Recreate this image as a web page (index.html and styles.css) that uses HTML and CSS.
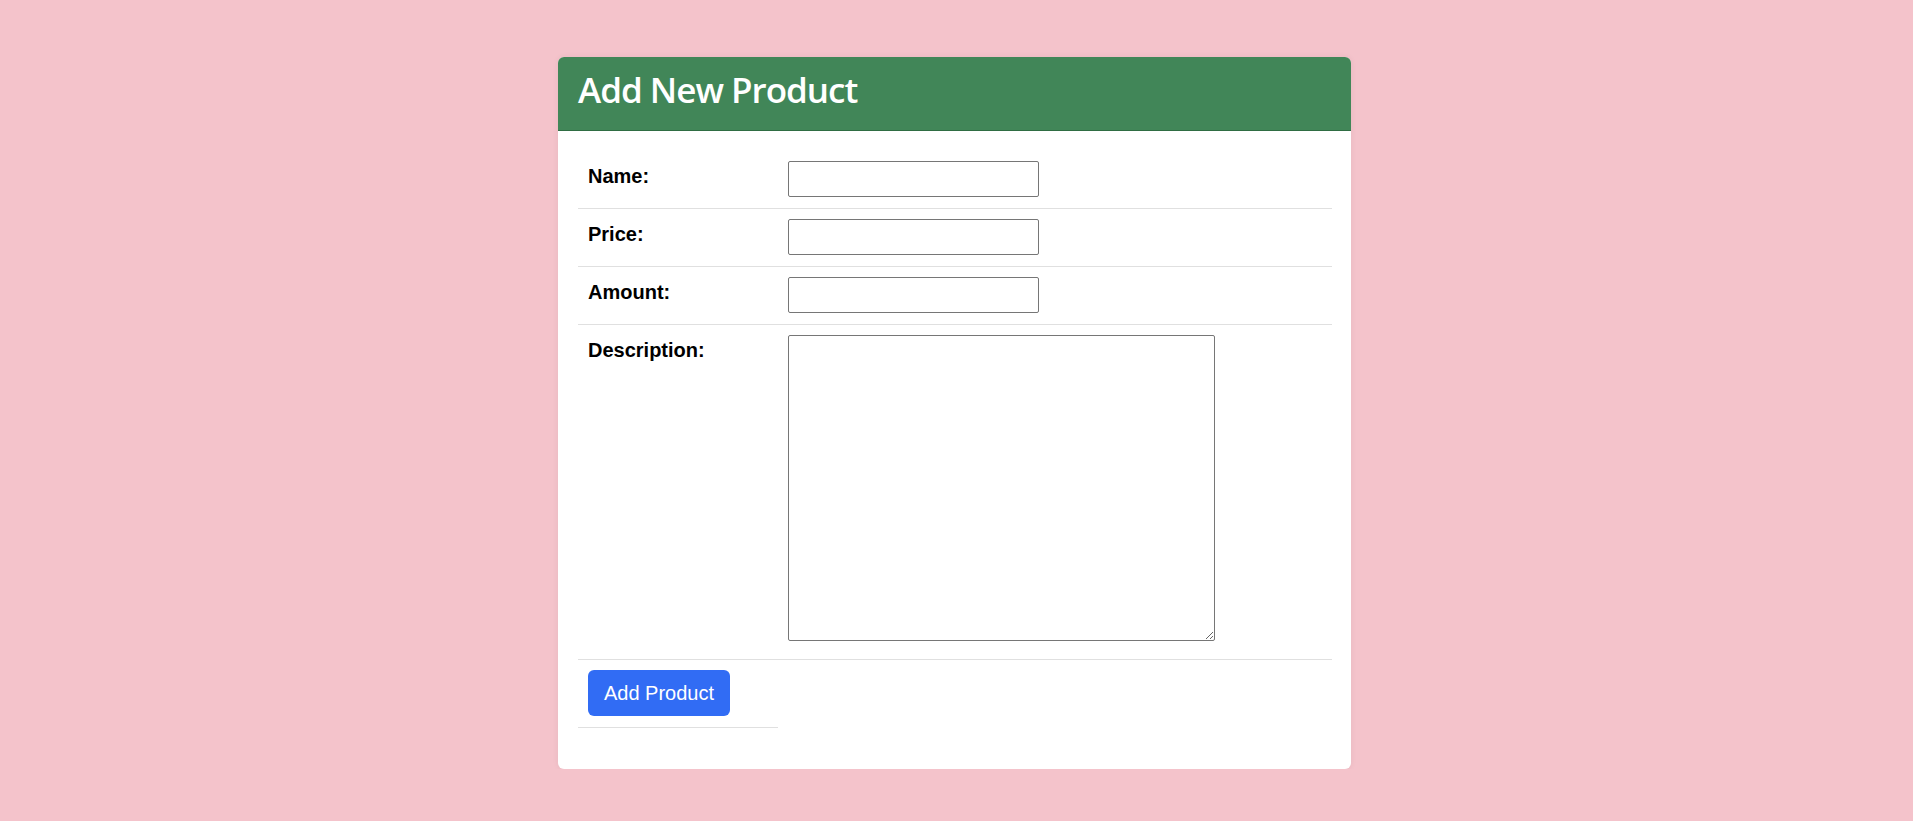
FILE: index.html
```html
<!DOCTYPE html>
<html lang="en">
<head>
<meta charset="utf-8">
<title>Add New Product</title>
<link rel="stylesheet" href="styles.css">
</head>
<body>
<div class="page">
  <div class="card">
    <div class="card-header">
      <h2 class="card-title">Add New Product</h2>
    </div>
    <form class="card-body">
      <table class="form-table">
        <tr>
          <td class="label-cell"><label for="name">Name:</label></td>
          <td class="field-cell"><input class="text-input" type="text" id="name"></td>
        </tr>
        <tr>
          <td class="label-cell"><label for="price">Price:</label></td>
          <td class="field-cell"><input class="text-input" type="text" id="price"></td>
        </tr>
        <tr>
          <td class="label-cell"><label for="amount">Amount:</label></td>
          <td class="field-cell"><input class="text-input" type="text" id="amount"></td>
        </tr>
        <tr>
          <td class="label-cell"><label for="description">Description:</label></td>
          <td class="field-cell"><textarea class="text-area" id="description"></textarea></td>
        </tr>
        <tr>
          <td class="button-cell"><button class="submit-btn" type="button">Add Product</button></td>
        </tr>
      </table>
    </form>
  </div>
</div>
</body>
</html>
```

FILE: styles.css
```css
html, body {
  margin: 0;
  padding: 0;
}

body {
  background: #f4c3cb;
  font-family: "Liberation Sans", Arial, sans-serif;
  color: #000;
}

.page {
  display: flex;
  justify-content: center;
  padding: 57px 4px 0 0;
}

.card {
  width: 793px;
  background: #fff;
  border-radius: 6px;
  overflow: hidden;
  box-shadow: 0 0 6px rgba(0, 0, 0, 0.06);
}

.card-header {
  background: #418658;
  border-bottom: 1px solid #2f6d43;
  padding: 15px 20px 23px;
}

.card-title {
  margin: 0;
  font-family: "Open Sans", "Noto Sans", sans-serif;
  font-weight: 600;
  font-size: 35px;
  line-height: 35px;
  letter-spacing: -1px;
  color: #fff;
}

.card-body {
  display: block;
  padding: 20px 19px 41px 20px;
}

.form-table {
  width: 100%;
  border-collapse: collapse;
}

.form-table td {
  border-bottom: 1px solid #e0e0e0;
  padding: 10px 10px 11px;
  vertical-align: top;
}

.label-cell {
  width: 180px;
}

.label-cell label {
  display: block;
  padding-top: 4px;
  font-weight: bold;
  font-size: 20px;
  line-height: 23px;
}

.text-input {
  display: block;
  box-sizing: border-box;
  width: 251px;
  height: 36px;
  margin: 0;
  border: 1px solid #767676;
  border-radius: 2px;
  background: #fff;
  font-size: 16px;
}

.text-area {
  display: block;
  box-sizing: border-box;
  width: 427px;
  height: 306px;
  margin: 0 0 7px;
  border: 1px solid #767676;
  border-radius: 2px;
  background: #fff;
}

.button-cell {
  padding-bottom: 10px;
}

.submit-btn {
  display: block;
  box-sizing: border-box;
  width: 142px;
  height: 46px;
  border: none;
  border-radius: 6px;
  background: #316cf4;
  color: #fff;
  font-family: "Liberation Sans", Arial, sans-serif;
  font-size: 20px;
  padding: 0;
}
```
